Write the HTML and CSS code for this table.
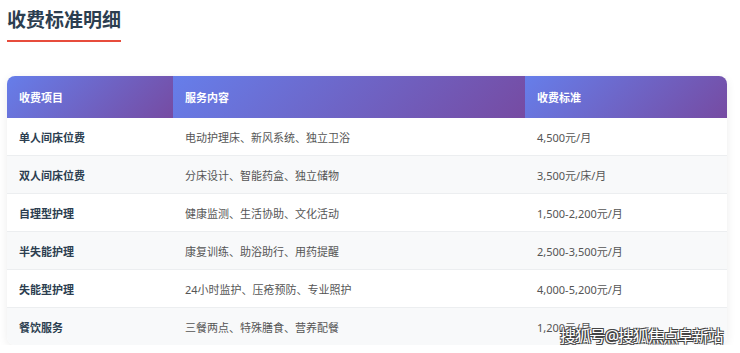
FILE: index.html
```html
<!DOCTYPE html>
<html>
<head>
    <meta charset="utf-8">
    <title>收费标准明细</title>
    <link rel="stylesheet" href="styles.css">
</head>
<body>
    <div class="page">
        <h2 class="section-title">收费标准明细</h2>

        <div class="fee-card">
            <table class="fee-table">
                <thead>
                    <tr>
                        <th class="col-item">收费项目</th>
                        <th class="col-desc">服务内容</th>
                        <th class="col-price">收费标准</th>
                    </tr>
                </thead>
                <tbody>
                    <tr>
                        <td class="item">单人间床位费</td>
                        <td>电动护理床、新风系统、独立卫浴</td>
                        <td>4,500元/月</td>
                    </tr>
                    <tr>
                        <td class="item">双人间床位费</td>
                        <td>分床设计、智能药盒、独立储物</td>
                        <td>3,500元/床/月</td>
                    </tr>
                    <tr>
                        <td class="item">自理型护理</td>
                        <td>健康监测、生活协助、文化活动</td>
                        <td>1,500-2,200元/月</td>
                    </tr>
                    <tr>
                        <td class="item">半失能护理</td>
                        <td>康复训练、助浴助行、用药提醒</td>
                        <td>2,500-3,500元/月</td>
                    </tr>
                    <tr>
                        <td class="item">失能型护理</td>
                        <td>24小时监护、压疮预防、专业照护</td>
                        <td>4,000-5,200元/月</td>
                    </tr>
                    <tr>
                        <td class="item">餐饮服务</td>
                        <td>三餐两点、特殊膳食、营养配餐</td>
                        <td>1,200元/月</td>
                    </tr>
                </tbody>
            </table>
        </div>
    </div>

    <div class="watermark">搜狐号@搜狐焦点阜新站</div>
</body>
</html>
```

FILE: styles.css
```css
html, body {
    margin: 0;
    padding: 0;
    background: #fff;
    font-family: "Noto Sans", "Noto Sans CJK SC", sans-serif;
}

.page {
    padding: 0 13px 0 7px;
}

.section-title {
    display: inline-block;
    margin: 7px 0 0 0;
    padding-bottom: 7px;
    font-size: 19px;
    line-height: 26px;
    font-weight: 700;
    color: #2c3e50;
    border-bottom: 2px solid #e74c3c;
}

.fee-card {
    margin-top: 34px;
    border-radius: 8px;
    overflow: hidden;
    box-shadow: 0 2px 10px rgba(0, 0, 0, 0.08);
}

.fee-table {
    width: 100%;
    border-collapse: collapse;
    font-size: 11px;
}

.fee-table th {
    height: 42px;
    padding: 0 12px;
    text-align: left;
    font-weight: 700;
    color: #fff;
    background: linear-gradient(135deg, #667eea 0%, #764ba2 100%);
}

.col-item {
    width: 142px;
}

.col-desc {
    width: 328px;
}

.fee-table td {
    height: 37px;
    padding: 0 12px;
    color: #555;
    border-bottom: 1px solid #eceef0;
}

.fee-table tbody tr:nth-child(even) td {
    background: #f8f9fa;
}

.fee-table tbody tr:last-child td {
    border-bottom: 0;
}

.fee-table td.item {
    font-weight: 700;
    color: #2c3e50;
}

.watermark {
    position: absolute;
    left: 560px;
    top: 326px;
    font-size: 16px;
    line-height: 20px;
    color: #fff;
    letter-spacing: -1.1px;
    text-shadow: -1px -1px 0 #444, 1px -1px 0 #444, -1px 1px 0 #444, 1px 1px 0 #444;
}
```
